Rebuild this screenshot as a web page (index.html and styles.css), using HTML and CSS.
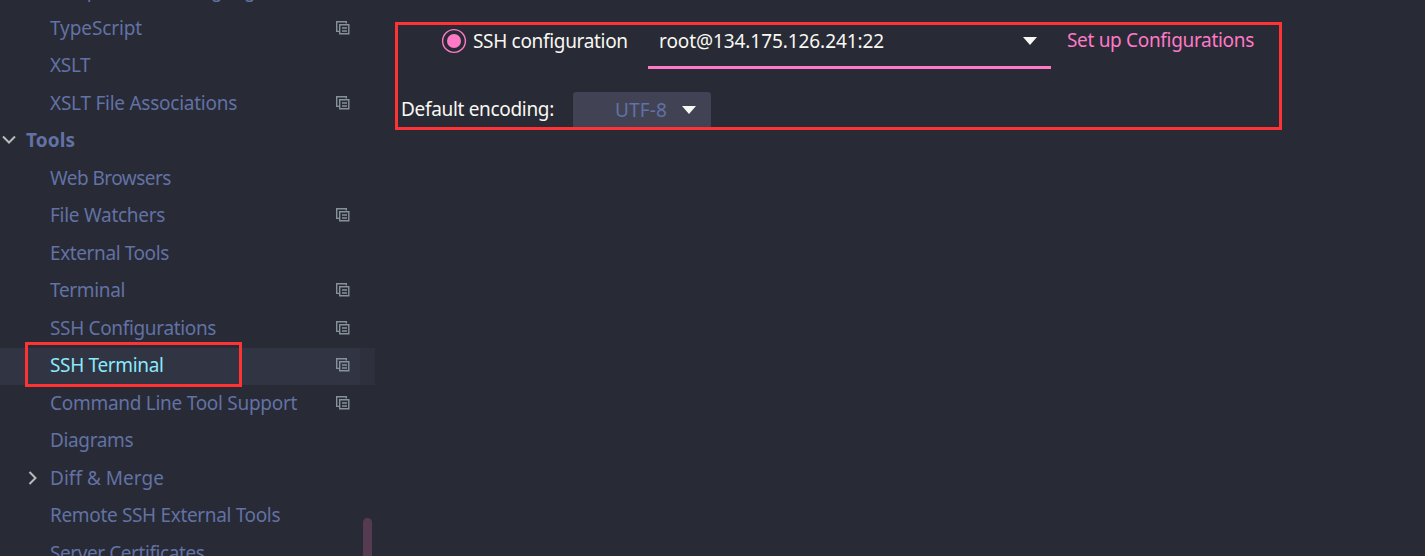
FILE: index.html
```html
<!DOCTYPE html>
<html lang="en">
<head>
<meta charset="utf-8">
<title>Settings</title>
<link rel="stylesheet" href="styles.css">
</head>
<body>
<svg class="defs" aria-hidden="true">
  <symbol id="copy" viewBox="0 0 14 14"><path d="M3 10.4H.7V.7h9.6v1.8M3.7 3.7h9.1v9.1H3.7zM6 7h5M6 10h5" fill="none" stroke="currentColor" stroke-width="1.4"/></symbol>
</svg>
<div class="window">
  <nav class="tree">
    <div class="row"><span class="label w-template">Template Data Languages</span></div>
    <div class="row"><span class="label w-ts">TypeScript</span><svg class="copy"><use href="#copy"/></svg></div>
    <div class="row"><span class="label w-xslt">XSLT</span></div>
    <div class="row"><span class="label w-assoc">XSLT File Associations</span><svg class="copy"><use href="#copy"/></svg></div>
    <div class="row group"><svg class="chevron down" viewBox="0 0 14 10"><path d="M1 1.5l6 6 6-6"/></svg><span class="label w-tools">Tools</span></div>
    <div class="row"><span class="label w-web">Web Browsers</span></div>
    <div class="row"><span class="label w-watch">File Watchers</span><svg class="copy"><use href="#copy"/></svg></div>
    <div class="row"><span class="label w-ext">External Tools</span></div>
    <div class="row"><span class="label w-term">Terminal</span><svg class="copy"><use href="#copy"/></svg></div>
    <div class="row"><span class="label w-conf">SSH Configurations</span><svg class="copy"><use href="#copy"/></svg></div>
    <div class="row selected"><span class="label w-sshterm">SSH Terminal</span><svg class="copy"><use href="#copy"/></svg><span class="mark"></span></div>
    <div class="row"><span class="label w-cmd">Command Line Tool Support</span><svg class="copy"><use href="#copy"/></svg></div>
    <div class="row"><span class="label w-diag">Diagrams</span></div>
    <div class="row expandable"><svg class="chevron right" viewBox="0 0 10 14"><path d="M1.5 1l6 6-6 6"/></svg><span class="label w-diff">Diff &amp; Merge</span></div>
    <div class="row"><span class="label w-remote">Remote SSH External Tools</span></div>
    <div class="row"><span class="label w-server">Server Certificates</span></div>
    <span class="scrollbar"></span>
  </nav>
  <main class="content">
    <section class="panel">
      <div class="ssh">
        <svg class="radio" viewBox="0 0 26 26"><circle cx="13" cy="13" r="11.4" fill="none" stroke="#ff79c6" stroke-width="1.4"/><circle cx="13" cy="13" r="7" fill="#ff79c6"/></svg>
        <span class="label w-radio">SSH configuration</span>
        <div class="select"><span class="label w-host">root@134.175.126.241:22</span><svg class="arrow" viewBox="0 0 14 8"><path d="M0 0h14L7 8z"/></svg></div>
        <span class="label link w-link">Set up Configurations</span>
      </div>
      <div class="encoding">
        <span class="label w-enc">Default encoding:</span>
        <div class="button"><span class="label w-utf">UTF-8</span><svg class="arrow" viewBox="0 0 14 8"><path d="M0 0h14L7 8z"/></svg></div>
      </div>
    </section>
  </main>
</div>
</body>
</html>
```
FILE: styles.css
```css
body { margin: 0; background: #282a36; font: 19px/24px "Noto Sans", sans-serif; color: #f8f8f2; }
.defs { position: absolute; width: 0; height: 0; }
.window { display: flex; height: 556px; overflow: hidden; }
.tree { position: relative; width: 375px; flex: none; margin-top: -27.3px; color: #6272a4; }
.row { display: flex; align-items: center; box-sizing: border-box; height: 37.5px; padding: 0 25px 2.5px 50px; }
.label { white-space: nowrap; letter-spacing: -0.34px; }
.copy { width: 14px; height: 14px; margin-left: auto; color: #87919b; }
.group { padding-left: 2px; font-weight: 700; }
.expandable { padding-left: 28px; }
.chevron { fill: none; stroke: #bbb; stroke-width: 2; }
.down { width: 14px; height: 10px; margin-right: 10px; }
.right { width: 10px; height: 14px; margin-right: 12px; }
.selected { position: relative; background: linear-gradient(90deg, #313442 360px, #2e313d 360px); color: #8be9fd; }
.mark { position: absolute; left: 25px; top: -6px; width: 211px; height: 39px; border: 3px solid #ff3333; }
.scrollbar { position: absolute; left: 363px; top: 545px; width: 9px; height: 60px; border-radius: 5px; background: #553b52; }
.w-ts { letter-spacing: -0.1px; }
.w-assoc { letter-spacing: -0.25px; }
.w-tools { letter-spacing: 0.1px; }
.w-web { letter-spacing: -0.53px; }
.w-watch { letter-spacing: -0.27px; }
.w-ext { letter-spacing: -0.4px; }
.w-cmd { letter-spacing: -0.28px; }
.w-diag { letter-spacing: -0.37px; }
.w-diff { letter-spacing: 0.03px; }
.w-server { letter-spacing: -0.42px; }
.w-host { letter-spacing: -0.08px; }
.w-radio, .w-enc, .w-link { letter-spacing: -0.32px; }
.w-utf { letter-spacing: 0.15px; }
.content { padding: 22px 0 0 20px; }
.panel { box-sizing: border-box; width: 887px; height: 108px; border: 3px solid #ff3333; overflow: hidden; }
.ssh { display: flex; height: 44px; padding-left: 43px; }
.ssh > .label { flex: none; margin-top: 4px; }
.ssh > .w-radio { width: 156px; }
.ssh > .link { margin-top: 3px; color: #ff79c6; }
.radio { flex: none; width: 26px; height: 26px; margin: 3px 6px 0 0; }
.select { display: flex; flex: none; box-sizing: border-box; width: 403px; height: 44px; padding: 4px 14px 0 11px; margin: 0 16px 0 19px; border-bottom: 3px solid #ff79c6; }
.arrow { width: 14px; height: 8px; fill: #f8f8f2; margin: 8px 0 0 auto; }
.encoding { display: flex; margin-top: 23px; padding-left: 3px; }
.encoding > .label { width: 154px; margin-top: 5px; }
.button { display: flex; box-sizing: border-box; width: 138px; height: 40px; margin-left: 18px; padding: 6px 15px 0 42px; border-radius: 3px; background: #414354; color: #6272a4; }
```
